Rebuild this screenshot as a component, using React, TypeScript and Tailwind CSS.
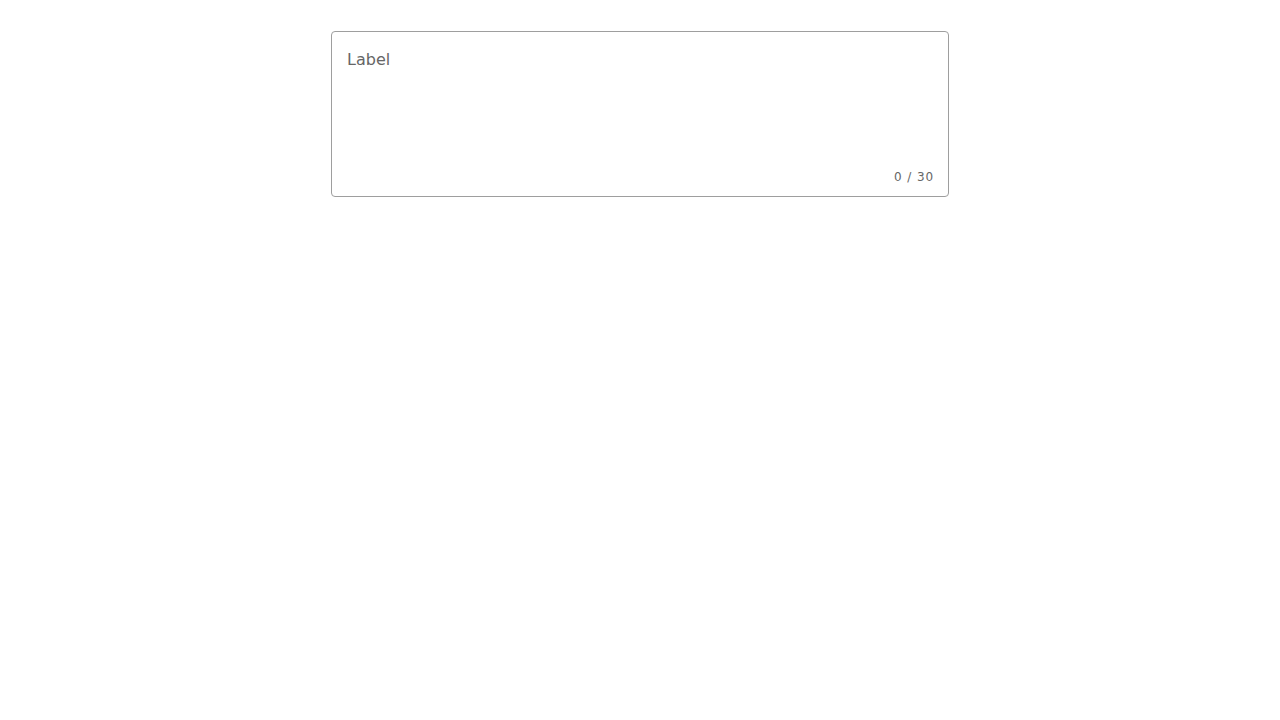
export default function App() {
  return (
    <div className="min-h-screen bg-white pt-[31px] flex justify-center" style={{ fontFamily: '"DejaVu Sans", sans-serif' }}>
      <div className="w-[618px] h-[166px] border border-[#9e9e9e] rounded-[4px] flex flex-col px-[15px] pt-[16px] pb-[11px]">
        <div className="text-[16px] leading-[24px] text-[#666666]">Label</div>
        <div className="flex-1" />
        <div className="-mr-[1px] text-right text-[12px] leading-[16px] text-[#666666] tracking-[0.9px]">0 / 30</div>
      </div>
    </div>
  );
}
